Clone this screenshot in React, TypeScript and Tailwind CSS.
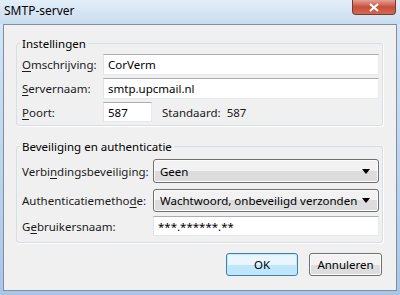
import React from 'react';

const font = { fontFamily: '"Noto Sans", "Open Sans", "Liberation Sans", sans-serif' };

const Field: React.FC<{ value: string; className?: string }> = ({ value, className = '' }) => (
  <div className={`h-full bg-white border border-[#abadb3] border-l-[#e2e3ea] border-r-[#e3e9ef] border-b-[#e3e9ef] pl-[4px] flex items-center text-black whitespace-nowrap ${className}`}>
    {value}
  </div>
);

const Combo: React.FC<{ value: string }> = ({ value }) => (
  <div className="h-full flex-1 rounded-[3px] border border-[#707070] bg-gradient-to-b from-[#f2f2f2] from-50% to-[#dcdcdc] to-50% shadow-[inset_0_0_0_1px_#fcfcfc] flex items-center pl-[6px] pr-[8px]">
    <span className="flex-1 text-black whitespace-nowrap overflow-hidden">{value}</span>
    <svg width="8" height="5" viewBox="0 0 8 5" className="shrink-0"><path d="M0 0h8L4 5z" fill="#000" /></svg>
  </div>
);

const Btn: React.FC<{ label: string; isDefault?: boolean; w: string }> = ({ label, isDefault, w }) => (
  <button
    className={`${w} h-[23px] rounded-[3px] border flex items-center justify-center text-black ${
      isDefault
        ? 'border-[#3c7fb1] bg-gradient-to-b from-[#eaf6fd] from-50% to-[#bee6fd] to-50% shadow-[inset_0_0_0_1px_#c7e8fb]'
        : 'border-[#707070] bg-gradient-to-b from-[#f2f2f2] from-50% to-[#dddddd] to-50% shadow-[inset_0_0_0_1px_#fcfcfc]'
    }`}
  >
    {label}
  </button>
);

export default function App() {
  return (
    <div style={font} className="w-[400px] h-[295px] bg-gradient-to-b from-[#d6e6f6] to-[#a9c6e6] flex flex-col text-[11.5px] leading-[15px] text-[#1a1a1a] overflow-hidden">
      {/* title bar */}
      <div className="h-[24px] flex items-start shrink-0 bg-gradient-to-b from-[#e3eef9] to-[#c9dcf0]">
        <span className="pl-[4px] pt-[3px] text-[12px] text-black">SMTP-server</span>
        <div className="ml-auto mr-[4px] w-[44px] h-[15px] rounded-b-[4px] border border-t-0 border-[#7a3a33] bg-gradient-to-b from-[#e3a195] via-[#c74e3e] to-[#d06a4e] flex items-center justify-center">
          <svg width="10" height="9" viewBox="0 0 10 9">
            <path d="M1 1l8 7M9 1L1 8" stroke="#fff" strokeWidth="2.2" />
          </svg>
        </div>
      </div>

      {/* client area */}
      <div className="mx-[3px] h-[267px] border border-[#7d8fa3] bg-[#f0f0f0] flex flex-col">
        <fieldset className="mt-[11px] ml-[12px] mr-[13px] border border-[#d5dfe5] rounded-[3px] pl-[3px] pr-[3px] pt-[3px] pb-[3px] shadow-[1px_1px_0_#fff]">
          <legend className="px-[2px] text-black">Instellingen</legend>
          <div className="flex flex-col pl-[2px]">
            <div className="flex items-center h-[21px]">
              <span className="w-[81px] shrink-0 whitespace-nowrap"><u className="underline-offset-2">O</u>mschrijving:</span>
              <Field value="CorVerm" className="flex-1" />
            </div>
            <div className="flex items-center h-[21px] mt-[3px]">
              <span className="w-[81px] shrink-0 whitespace-nowrap"><u className="underline-offset-2">S</u>ervernaam:</span>
              <Field value="smtp.upcmail.nl" className="flex-1" />
            </div>
            <div className="flex items-center h-[20px] mt-[3px]">
              <span className="w-[81px] shrink-0 whitespace-nowrap"><u className="underline-offset-2">P</u>oort:</span>
              <Field value="587" className="w-[49px] shrink-0" />
              <span className="ml-[10px] shrink-0 whitespace-nowrap">Standaard:</span>
              <span className="ml-[6px]">587</span>
            </div>
          </div>
        </fieldset>

        <fieldset className="mt-[13px] ml-[12px] mr-[13px] border border-[#d5dfe5] rounded-[3px] pl-[3px] pr-[3px] pt-[5px] pb-[6px] shadow-[1px_1px_0_#fff]">
          <legend className="px-[2px] text-black">Beveiliging en authenticatie</legend>
          <div className="flex flex-col pl-[2px]">
            <div className="flex items-center h-[24px]">
              <span className="w-[131px] shrink-0 whitespace-nowrap">Verbi<u className="underline-offset-2">n</u>dingsbeveiliging:</span>
              <Combo value="Geen" />
            </div>
            <div className="flex items-center h-[23px] mt-[6px]">
              <span className="w-[131px] shrink-0 whitespace-nowrap">Authenticatiemetho<u className="underline-offset-2">d</u>e:</span>
              <Combo value="Wachtwoord, onbeveiligd verzonden" />
            </div>
            <div className="flex items-center h-[20px] mt-[4px]">
              <span className="w-[131px] shrink-0 whitespace-nowrap">G<u className="underline-offset-2">e</u>bruikersnaam:</span>
              <Field value="***.******.**" className="flex-1 pl-[4px]" />
            </div>
          </div>
        </fieldset>

        <div className="flex justify-end gap-[11px] mt-[10px] pr-[14px]">
          <Btn label="OK" isDefault w="w-[72px]" />
          <Btn label="Annuleren" w="w-[73px]" />
        </div>
      </div>
    </div>
  );
}
